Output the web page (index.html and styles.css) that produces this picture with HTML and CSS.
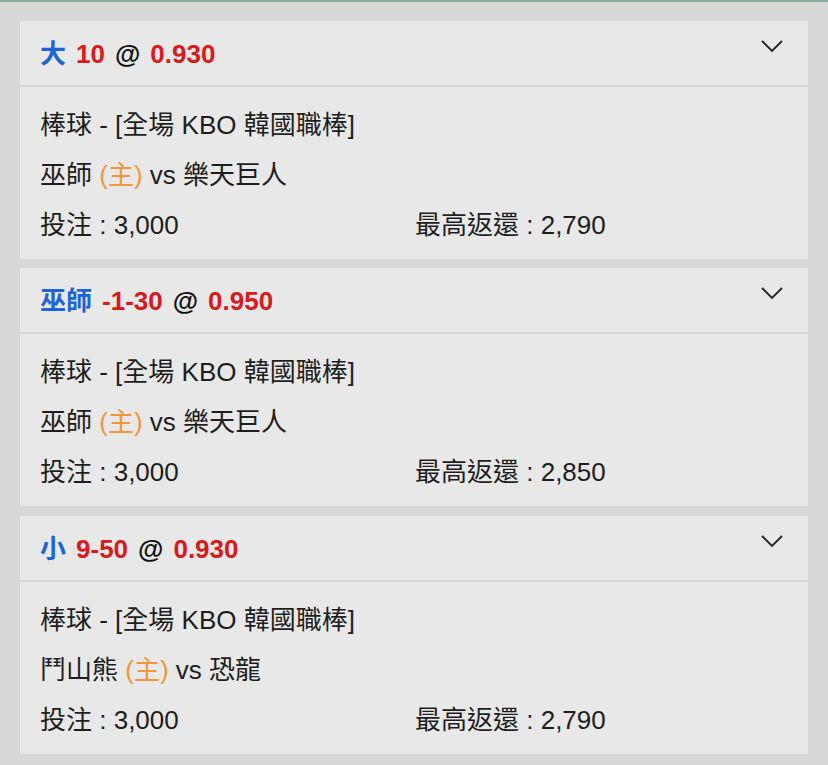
FILE: index.html
```html
<!DOCTYPE html>
<html lang="zh-Hant">
<head>
<meta charset="utf-8">
<link rel="stylesheet" href="styles.css">
</head>
<body>
<div class="topline"></div>
<main class="list">
  <section class="card">
    <div class="head">
      <div class="title"><span class="blue">大</span><span class="red">10</span><span class="at">@</span><span class="red">0.930</span></div>
      <svg class="chev" width="24" height="14" viewBox="0 0 24 14"><path d="M2 2 L12 12 L22 2" fill="none" stroke="#222" stroke-width="1.8"/></svg>
    </div>
    <div class="body">
      <div class="line">棒球 - [全場 KBO 韓國職棒]</div>
      <div class="line">巫師 <span class="home">(主)</span> vs 樂天巨人</div>
      <div class="line split"><span class="stake">投注 : 3,000</span><span>最高返還 : 2,790</span></div>
    </div>
  </section>
  <section class="card">
    <div class="head">
      <div class="title"><span class="blue">巫師</span><span class="red">-1-30</span><span class="at">@</span><span class="red">0.950</span></div>
      <svg class="chev" width="24" height="14" viewBox="0 0 24 14"><path d="M2 2 L12 12 L22 2" fill="none" stroke="#222" stroke-width="1.8"/></svg>
    </div>
    <div class="body">
      <div class="line">棒球 - [全場 KBO 韓國職棒]</div>
      <div class="line">巫師 <span class="home">(主)</span> vs 樂天巨人</div>
      <div class="line split"><span class="stake">投注 : 3,000</span><span>最高返還 : 2,850</span></div>
    </div>
  </section>
  <section class="card card-last">
    <div class="head">
      <div class="title"><span class="blue">小</span><span class="red">9-50</span><span class="at">@</span><span class="red">0.930</span></div>
      <svg class="chev" width="24" height="14" viewBox="0 0 24 14"><path d="M2 2 L12 12 L22 2" fill="none" stroke="#222" stroke-width="1.8"/></svg>
    </div>
    <div class="body">
      <div class="line">棒球 - [全場 KBO 韓國職棒]</div>
      <div class="line">鬥山熊 <span class="home">(主)</span> vs 恐龍</div>
      <div class="line split"><span class="stake">投注 : 3,000</span><span>最高返還 : 2,790</span></div>
    </div>
  </section>
</main>
</body>
</html>
```
FILE: styles.css
```css
html, body {
  margin: 0;
  padding: 0;
}
body {
  background: #d8d8d8;
  width: 828px;
  height: 765px;
  overflow: hidden;
  font-family: "Liberation Sans", Arial, "Noto Sans CJK TC", sans-serif;
  color: #1e1e1e;
}
.topline {
  height: 2px;
  background: #86ab98;
}
.list {
  display: flex;
  flex-direction: column;
  gap: 9px;
  padding: 19px 20px 0 20px;
}
.card {
  background: #e8e8e8;
}
.card-last {
  margin-top: 1px;
}
.head {
  height: 64px;
  display: flex;
  align-items: center;
  justify-content: space-between;
  padding: 0 24px 0 20px;
  border-bottom: 2px solid #d4d4d4;
}
.title {
  display: flex;
  align-items: baseline;
  gap: 10px;
  font-size: 26px;
  font-weight: bold;
  margin-top: -3px;
}
.blue {
  color: #1d63d8;
}
.red {
  color: #d91a1a;
}
.at {
  color: #111;
}
.chev {
  margin-top: -14px;
}
.body {
  padding: 13px 20px 9px 20px;
  font-size: 26px;
}
.line {
  height: 50px;
  line-height: 50px;
}
.home {
  color: #f3963a;
}
.split {
  display: flex;
}
.stake {
  width: 375px;
}
```
